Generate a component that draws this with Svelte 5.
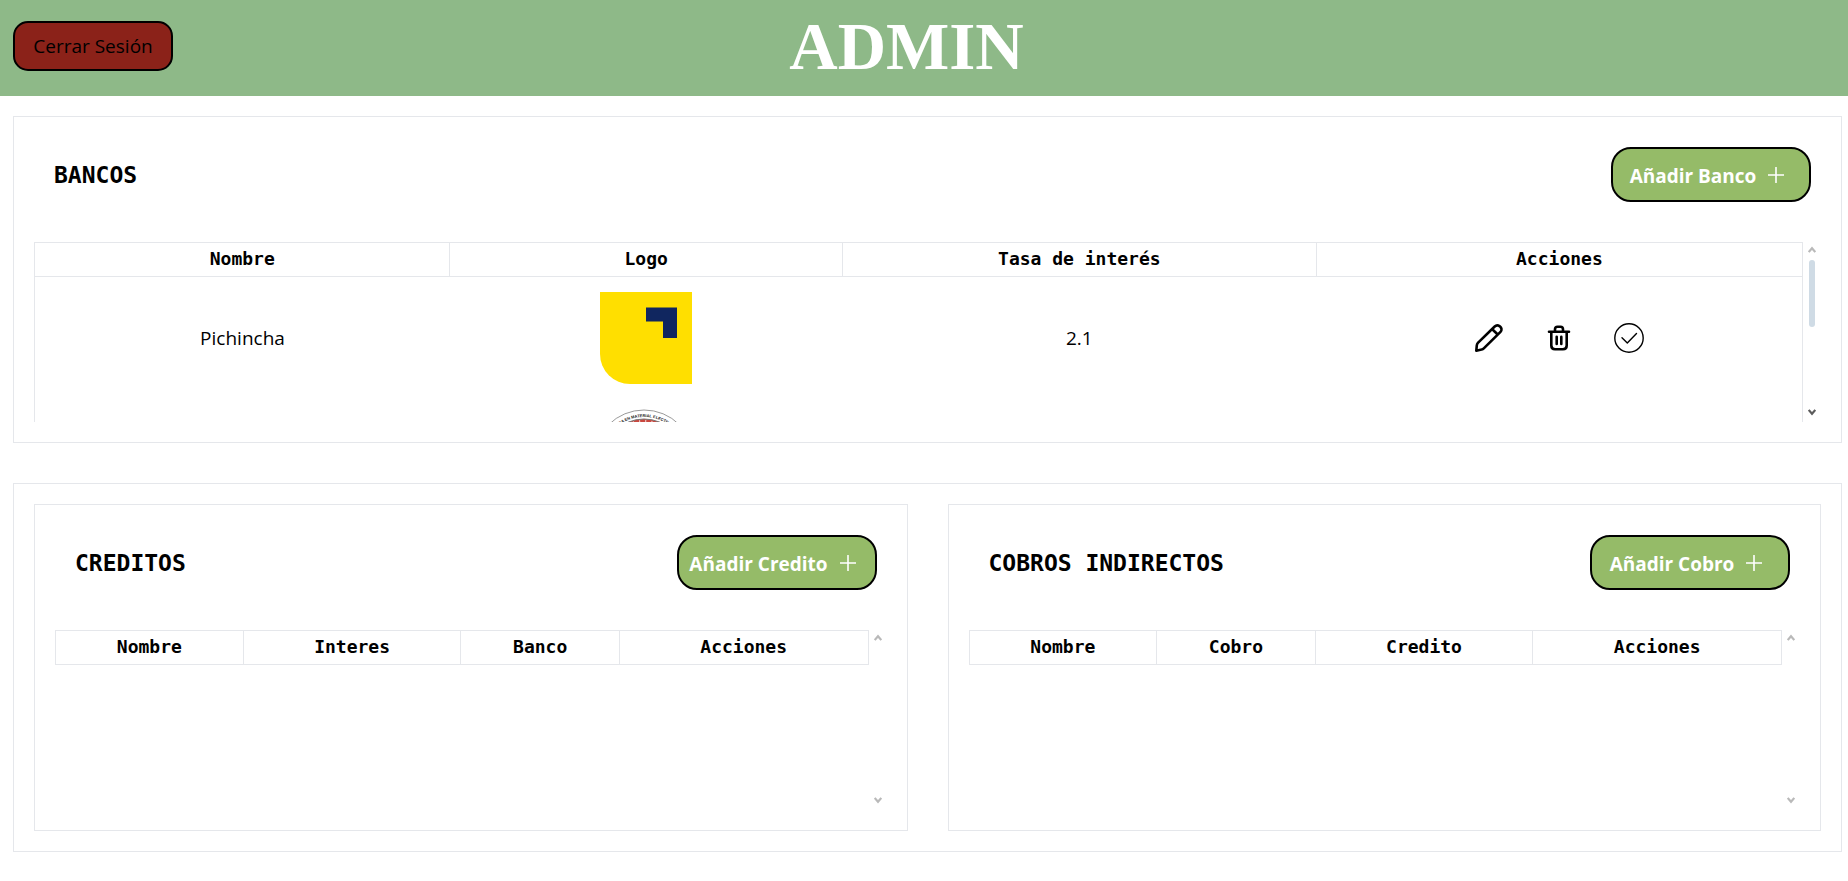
<script>
  const logout = 'Cerrar Sesión';
  const banks = [
    { name: 'Pichincha', rate: '2.1', logo: 'pichincha' },
    { name: '', rate: '', logo: 'seal' }
  ];
  const cards = [
    {
      id: 'creditos',
      title: 'CREDITOS',
      add: 'Añadir Credito',
      columns: [['Nombre', 23.1], ['Interes', 26.8], ['Banco', 19.5], ['Acciones', 30.6]]
    },
    {
      id: 'cobros',
      title: 'COBROS INDIRECTOS',
      add: 'Añadir Cobro',
      columns: [['Nombre', 23.1], ['Cobro', 19.5], ['Credito', 26.8], ['Acciones', 30.6]]
    }
  ];
  const bankColumns = [['Nombre', 23.5], ['Logo', 22.2], ['Tasa de interés', 26.8], ['Acciones', 27.5]];
</script>

{#snippet heading(id, title, add)}
  <div class="heading">
    <h2 {id}>{title}</h2>
    <button class="add" type="button">
      <span>{add}</span>
      <svg width="16" height="16" viewBox="0 0 16 16" aria-hidden="true">
        <path d="M8 0.5V15.5M0.5 8H15.5" fill="none" stroke="#fff" stroke-width="1.6" stroke-linecap="round" />
      </svg>
    </button>
  </div>
{/snippet}

{#snippet columnHead(columns)}
  <thead>
    <tr>
      {#each columns as [label, width]}
        <th scope="col" style="width: {width}%">{label}</th>
      {/each}
    </tr>
  </thead>
{/snippet}

{#snippet bar(active)}
  <div class="bar" aria-hidden="true">
    <svg width="8" height="7" viewBox="0 0 8 7"><path d="M0.7 6L4 2.2L7.3 6" fill="none" stroke="#b9b9b9" stroke-width="2.2" /></svg>
    <div class="track">{#if active}<div class="thumb"></div>{/if}</div>
    <svg width="8" height="7" viewBox="0 0 8 7"><path d="M0.7 1L4 4.800L7.3 1" fill="none" stroke={active ? '#5c5c5c' : '#b9b9b9'} stroke-width="2.2" /></svg>
  </div>
{/snippet}

<header>
  <button class="logout" type="button">{logout}</button>
  <h1>ADMIN</h1>
</header>

<main>
  <section class="panel" aria-labelledby="bancos">
    {@render heading('bancos', 'BANCOS', 'Añadir Banco')}
    <div class="list">
      <div class="scroll">
        <table>
          {@render columnHead(bankColumns)}
          <tbody>
            {#each banks as bank}
              <tr>
                <td>{bank.name}</td>
                <td>
                  {#if bank.logo === 'pichincha'}
                    <svg class="logo" width="92" height="92" viewBox="0 0 92 92" role="img" aria-label="Pichincha">
                      <path d="M0 0H92V92H30A30 30 0 0 1 0 62Z" fill="#ffdf00" />
                      <path d="M46 15.5H77V46H63V29.5H46Z" fill="#10265f" />
                    </svg>
                  {:else}
                    <svg class="logo" width="92" height="92" viewBox="0 0 92 92" role="img" aria-label="Material eléctrico">
                      <defs><path id="ring" d="M1 51A43 43 0 0 1 87 51" /></defs>
                      <circle cx="44" cy="51" r="50" fill="#fff" stroke="#9a9a9a" stroke-width="1" />
                      <circle cx="44" cy="51" r="41" fill="#c9483f" stroke="#777" stroke-width="1" />
                      <circle cx="44" cy="51" r="38" fill="none" stroke="#efd9d5" stroke-width="4" stroke-dasharray="1 5" />
                      <text class="seal"><textPath href="#ring" startOffset="50%" text-anchor="middle">DA EN MATERIAL ELECTRI</textPath></text>
                    </svg>
                  {/if}
                </td>
                <td>{bank.rate}</td>
                <td>
                  <div class="actions">
                    <button type="button" aria-label="Editar">
                      <svg width="30" height="30" viewBox="0 0 30 30" fill="none" stroke="#000" stroke-width="2.6" stroke-linejoin="round">
                        <path d="M2.300 27.700L2.800 22.300Q3 20.800 3.900 19.900L20.700 3.500Q22.300 1.900 24.300 2.500Q27 3.300 27.500 6Q27.700 7.600 26.500 8.800L9.800 25.300Q8.900 26.200 7.600 26.600ZM18 6L24 11.700" />
                      </svg>
                    </button>
                    <button type="button" aria-label="Eliminar">
                      <svg width="30" height="30" viewBox="0 0 30 30" fill="none" stroke="#000" stroke-width="2.6" stroke-linecap="round" stroke-linejoin="round">
                        <path d="M5 8.700H25M7.300 8.700V22.500Q7.300 26.200 11 26.200H19Q22.700 26.200 22.700 22.500V8.700M11 8V6.300Q11 3.700 13.500 3.700H16.500Q19 3.700 19 6.300V8M12.700 13.800V21M17.300 13.800V21" />
                      </svg>
                    </button>
                    <button type="button" aria-label="Confirmar">
                      <svg width="30" height="30" viewBox="0 0 30 30" fill="none" stroke="#000" stroke-width="1.400" stroke-linecap="round" stroke-linejoin="round">
                        <circle cx="15" cy="15" r="14.200" />
                        <path d="M8 14.800L13.300 20L22.500 10.500" />
                      </svg>
                    </button>
                  </div>
                </td>
              </tr>
            {/each}
          </tbody>
        </table>
      </div>
      {@render bar(true)}
    </div>
  </section>

  <div class="panel pair">
    {#each cards as card}
      <section class="panel" aria-labelledby={card.id}>
        {@render heading(card.id, card.title, card.add)}
        <div class="list">
          <div class="scroll">
            <table>{@render columnHead(card.columns)}</table>
          </div>
          {@render bar(false)}
        </div>
      </section>
    {/each}
  </div>
</main>

<style>
  :global(body) {
    margin: 0;
    background: #fff;
    color: #000;
    font-family: 'Open Sans', 'Noto Sans', sans-serif;
    font-size: 19px;
  }
  * {
    box-sizing: border-box;
  }
  button {
    font: inherit;
    cursor: pointer;
  }
  header {
    display: grid;
    grid-template-columns: 1fr auto 1fr;
    align-items: center;
    height: 96px;
    padding: 0 48px 4px 13px;
    background: #8eb988;
  }
  .logout {
    justify-self: start;
    width: 160px;
    height: 50px;
    padding: 0;
    border: 2px solid #000;
    border-radius: 15px;
    background: #8b2219;
    color: #000;
  }
  h1 {
    margin: 0;
    color: #fff;
    font: bold 67px/80px 'Liberation Serif', serif;
  }
  main {
    display: grid;
    gap: 40px;
    padding: 20px 6px 28px 13px;
  }
  .panel {
    min-width: 0;
    padding: 20px;
    border: 1px solid #e5e7eb;
  }
  .pair {
    display: grid;
    grid-template-columns: 1fr 1fr;
    gap: 40px;
  }
  .heading {
    display: flex;
    justify-content: space-between;
    align-items: center;
    margin-bottom: 30px;
    padding: 10px 10px 10px 20px;
  }
  h2 {
    margin: 0;
    font: bold 23px/30px 'DejaVu Sans Mono', monospace;
  }
  .add {
    display: flex;
    align-items: center;
    justify-content: center;
    gap: 12px;
    width: 200px;
    height: 55px;
    padding: 0 8px 0 0;
    border: 2px solid #000;
    border-radius: 20px;
    background: #95bb68;
    color: #fff;
    font-weight: 700;
    white-space: nowrap;
  }
  .add span {
    padding-top: 2px;
  }
  .list {
    display: flex;
    height: 180px;
  }
  .scroll {
    flex: 1;
    min-width: 0;
    overflow: auto;
    scrollbar-width: none;
  }
  table {
    width: 100%;
    border-collapse: collapse;
    table-layout: fixed;
    border: 1px solid #e5e7eb;
  }
  th {
    height: 34px;
    padding: 0 0 2px;
    border: 1px solid #e5e7eb;
    font: bold 18px/24px 'DejaVu Sans Mono', monospace;
  }
  td {
    height: 118px;
    padding: 4px 0 0;
    text-align: center;
  }
  .logo {
    display: block;
    margin: 0 auto;
    overflow: visible;
  }
  .seal {
    fill: #222;
    font: bold 4px 'Liberation Sans', sans-serif;
  }
  .actions {
    display: flex;
    justify-content: center;
    gap: 40px;
  }
  .actions button {
    display: flex;
    padding: 0;
    border: 0;
    background: none;
  }
  .bar {
    display: flex;
    flex-direction: column;
    align-items: center;
    width: 18px;
    padding: 4px 0 6px;
  }
  .track {
    flex: 1;
    width: 6px;
    padding-top: 7px;
  }
  .thumb {
    height: 67px;
    border-radius: 3px;
    background: #cfdbe5;
  }
</style>
